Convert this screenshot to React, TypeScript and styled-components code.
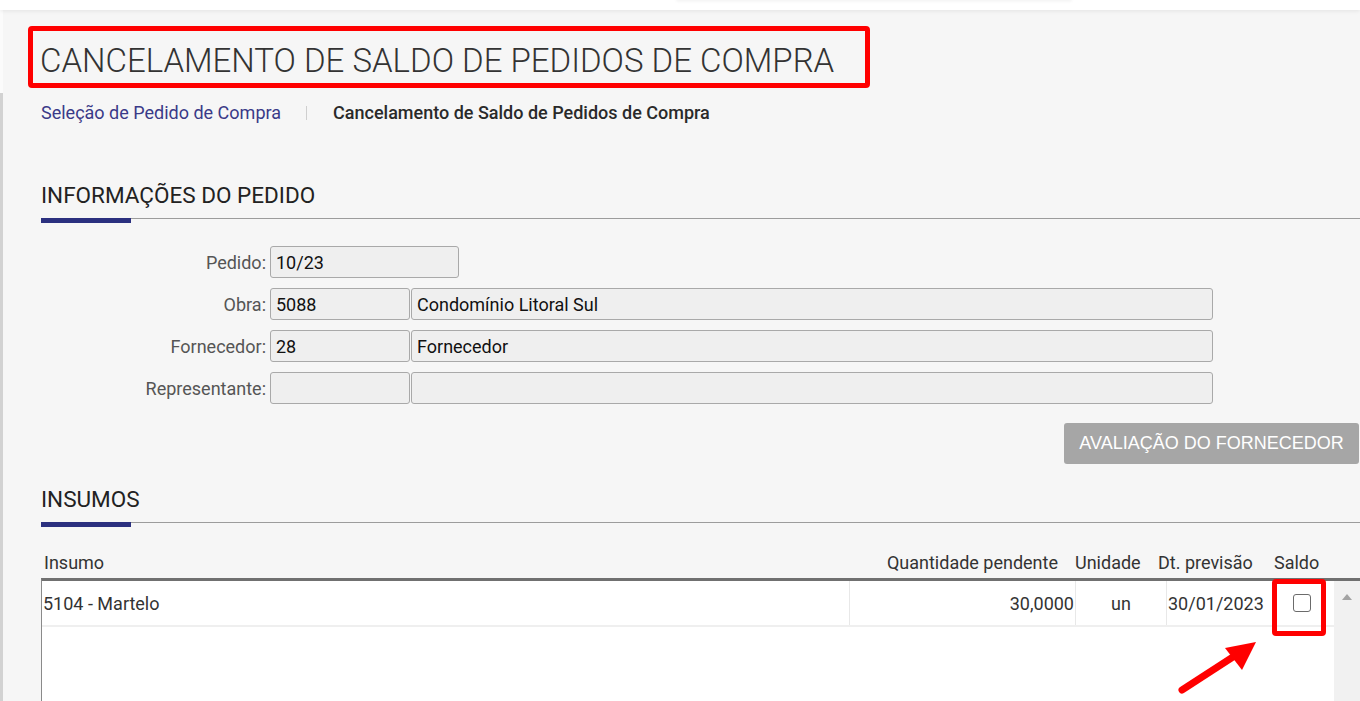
import React from 'react';
import styled, { createGlobalStyle } from 'styled-components';

const GlobalStyle = createGlobalStyle`
  html, body {
    margin: 0;
    padding: 0;
    background: #f6f6f6;
    font-family: Roboto, "Noto Sans", "Liberation Sans", sans-serif;
    color: #333;
    overflow: hidden;
  }
  * { box-sizing: border-box; }
`;

const Page = styled.div`
  width: 1360px;
  height: 701px;
  display: flex;
  flex-direction: column;
  background: #f6f6f6;
  overflow: hidden;
`;

const TopBar = styled.div`
  height: 10px;
  flex: none;
  background: #ffffff;
  box-shadow: 0 1px 4px rgba(0, 0, 0, 0.08);
  position: relative;
  z-index: 2;
  display: flex;
  justify-content: flex-start;
  padding-left: 676px;
`;

const SearchShadow = styled.div`
  width: 396px;
  height: 1px;
  margin-top: -1px;
  border-radius: 0 0 4px 4px;
  box-shadow: 0 1px 3px rgba(0, 0, 0, 0.12);
`;

const Body = styled.div`
  flex: 1;
  display: flex;
  min-height: 0;
`;

const SideEdge = styled.div`
  width: 3px;
  flex: none;
  display: flex;
  flex-direction: column;
`;

const SideTop = styled.div`
  height: 83px;
  background: #fbfbfb;
`;

const SideRest = styled.div`
  flex: 1;
  background: #d2d2d2;
`;

const Main = styled.main`
  flex: 1;
  padding-left: 38px;
  display: flex;
  flex-direction: column;
  min-width: 0;
`;

const TitleMark = styled.div`
  align-self: flex-start;
  margin-top: 16px;
  margin-left: -13px;
  width: 842px;
  height: 62px;
  border: 5px solid #ff0000;
  border-radius: 4px;
  display: flex;
  align-items: center;
  padding: 7px 0 0 7px;
`;

const Title = styled.h1`
  margin: 0;
  font-family: Roboto, sans-serif;
  font-weight: 300;
  font-size: 33px;
  line-height: 36px;
  color: #333;
  white-space: nowrap;
`;

const Breadcrumb = styled.nav`
  display: flex;
  align-items: center;
  margin-top: 13px;
  height: 24px;
  font-size: 18px;
  line-height: 24px;
  white-space: nowrap;
`;

const Crumb = styled.span<{ $current?: boolean }>`
  color: ${(p) => (p.$current ? '#2a2a2a' : '#3a3a88')};
  font-weight: ${(p) => (p.$current ? 500 : 400)};
`;

const CrumbSep = styled.span`
  width: 1px;
  height: 14px;
  background: #cfcfcf;
  margin: 0 26px 0 25px;
`;

const SectionHead = styled.div<{ $top: number }>`
  margin-top: ${(p) => p.$top}px;
  display: flex;
  flex-direction: column;
`;

const SectionTitle = styled.h2`
  margin: 0 0 11px;
  font-family: Roboto, sans-serif;
  font-weight: 400;
  font-size: 22.5px;
  line-height: 24px;
  color: #222;
`;

const Rule = styled.div`
  display: flex;
  align-items: flex-start;
  height: 5px;
`;

const RuleAccent = styled.div`
  width: 90px;
  height: 5px;
  background: #2b307f;
`;

const RuleLine = styled.div`
  flex: 1;
  height: 1px;
  background: #9c9c9c;
`;

const Form = styled.div`
  margin-top: 23px;
  display: flex;
  flex-direction: column;
  gap: 10px;
`;

const FieldRow = styled.div`
  display: flex;
  align-items: center;
  height: 32px;
`;

const Label = styled.label`
  width: 229px;
  text-align: right;
  font-size: 18px;
  color: #555;
  padding-right: 4px;
  flex: none;
`;

const Field = styled.div<{ $w: number }>`
  width: ${(p) => p.$w}px;
  height: 32px;
  flex: none;
  background: #efefef;
  border: 1px solid #a9a9a9;
  border-radius: 3px;
  font-size: 18px;
  color: #111;
  padding: 0 5px;
  display: flex;
  align-items: center;
  margin-right: 1px;
`;

const Actions = styled.div`
  display: flex;
  justify-content: flex-end;
  margin-top: 19px;
  padding-right: 1px;
`;

const GrayButton = styled.button`
  width: 295px;
  height: 41px;
  border: none;
  border-radius: 3px;
  background: #a6a6a6;
  color: #ffffff;
  font-family: "Liberation Sans", Arial, sans-serif;
  font-size: 18px;
  padding: 0;
  cursor: pointer;
`;

const TableHead = styled.div`
  display: flex;
  align-items: center;
  height: 32px;
  margin-top: 19px;
  font-size: 18px;
  color: #333;
`;

const HeadCell = styled.div<{ $w?: number; $align?: string; $pl?: number; $pr?: number }>`
  ${(p) => (p.$w ? `width: ${p.$w}px; flex: none;` : 'flex: 1;')}
  text-align: ${(p) => p.$align || 'left'};
  padding-left: ${(p) => p.$pl || 0}px;
  padding-right: ${(p) => p.$pr || 0}px;
  white-space: nowrap;
`;

const TableBox = styled.div`
  flex: 1;
  display: flex;
  border-top: 3px solid #707070;
  border-left: 1px solid #8a8a8a;
  min-height: 0;
`;

const Rows = styled.div`
  flex: 1;
  background: #ffffff;
`;

const Row = styled.div`
  display: flex;
  height: 46px;
  border-bottom: 2px solid #efefef;
  font-size: 18px;
  color: #333;
`;

const Cell = styled.div<{ $w?: number; $align?: string; $pl?: number; $pr?: number; $sep?: boolean }>`
  ${(p) => (p.$w ? `width: ${p.$w}px; flex: none;` : 'flex: 1;')}
  display: flex;
  align-items: center;
  justify-content: ${(p) => p.$align || 'flex-start'};
  padding-left: ${(p) => p.$pl || 0}px;
  padding-right: ${(p) => p.$pr || 0}px;
  border-left: ${(p) => (p.$sep ? '1px solid #e8e8e8' : 'none')};
  white-space: nowrap;
  position: relative;
`;

const Check = styled.span`
  width: 18px;
  height: 18px;
  border: 1.5px solid #6b6b6b;
  border-radius: 3px;
  background: #fff;
`;

const CheckMark = styled.div`
  position: absolute;
  left: 8px;
  top: -2px;
  width: 54px;
  height: 57px;
  border: 5px solid #ff0000;
  border-radius: 4px;
`;

const Scrollbar = styled.div`
  width: 26px;
  flex: none;
  background: #f1f1f1;
  display: flex;
  justify-content: center;
  padding-top: 13px;
`;

const Arrow = styled.svg`
  position: absolute;
  left: 1170px;
  top: 632px;
  pointer-events: none;
`;

const Shell = styled.div`
  position: relative;
`;

export default function App() {
  return (
    <Shell>
      <GlobalStyle />
      <Page>
        <TopBar>
          <SearchShadow />
        </TopBar>
        <Body>
          <SideEdge>
            <SideTop />
            <SideRest />
          </SideEdge>
          <Main>
            <TitleMark>
              <Title>CANCELAMENTO DE SALDO DE PEDIDOS DE COMPRA</Title>
            </TitleMark>
            <Breadcrumb>
              <Crumb>Seleção de Pedido de Compra</Crumb>
              <CrumbSep />
              <Crumb $current>Cancelamento de Saldo de Pedidos de Compra</Crumb>
            </Breadcrumb>

            <SectionHead $top={58}>
              <SectionTitle>INFORMAÇÕES DO PEDIDO</SectionTitle>
              <Rule>
                <RuleAccent />
                <RuleLine />
              </Rule>
            </SectionHead>

            <Form>
              <FieldRow>
                <Label>Pedido:</Label>
                <Field $w={189}>10/23</Field>
              </FieldRow>
              <FieldRow>
                <Label>Obra:</Label>
                <Field $w={140}>5088</Field>
                <Field $w={802}>Condomínio Litoral Sul</Field>
              </FieldRow>
              <FieldRow>
                <Label>Fornecedor:</Label>
                <Field $w={140}>28</Field>
                <Field $w={802}>Fornecedor</Field>
              </FieldRow>
              <FieldRow>
                <Label>Representante:</Label>
                <Field $w={140} />
                <Field $w={802} />
              </FieldRow>
            </Form>

            <Actions>
              <GrayButton>AVALIAÇÃO DO FORNECEDOR</GrayButton>
            </Actions>

            <SectionHead $top={23}>
              <SectionTitle>INSUMOS</SectionTitle>
              <Rule>
                <RuleAccent />
                <RuleLine />
              </Rule>
            </SectionHead>

            <TableHead>
              <HeadCell $pl={3}>Insumo</HeadCell>
              <HeadCell $w={219} $align="right" $pr={10}>Quantidade pendente</HeadCell>
              <HeadCell $w={82} $pl={7}>Unidade</HeadCell>
              <HeadCell $w={112} $pl={8}>Dt. previsão</HeadCell>
              <HeadCell $w={72} $pl={12}>Saldo</HeadCell>
              <HeadCell $w={26} />
            </TableHead>

            <TableBox>
              <Rows>
                <Row>
                  <Cell $pl={1}>5104 - Martelo</Cell>
                  <Cell $w={226} $align="flex-end" $pr={1} $sep>30,0000</Cell>
                  <Cell $w={91} $align="center" $sep>un</Cell>
                  <Cell $w={98} $pl={1} $sep>30/01/2023</Cell>
                  <Cell $w={70} $pl={29}>
                    <Check />
                    <CheckMark />
                  </Cell>
                </Row>
              </Rows>
              <Scrollbar>
                <svg width="10" height="6" viewBox="0 0 10 6">
                  <path d="M0 6 L5 0 L10 6 Z" fill="#a3a3a3" />
                </svg>
              </Scrollbar>
            </TableBox>
          </Main>
        </Body>
      </Page>
      <Arrow width="100" height="70" viewBox="0 0 100 70">
        <path d="M12 58 L66 23" stroke="#ff0000" strokeWidth="7" strokeLinecap="round" fill="none" />
        <path d="M86 10 L55 16 L72 38 Z" fill="#ff0000" />
      </Arrow>
    </Shell>
  );
}
